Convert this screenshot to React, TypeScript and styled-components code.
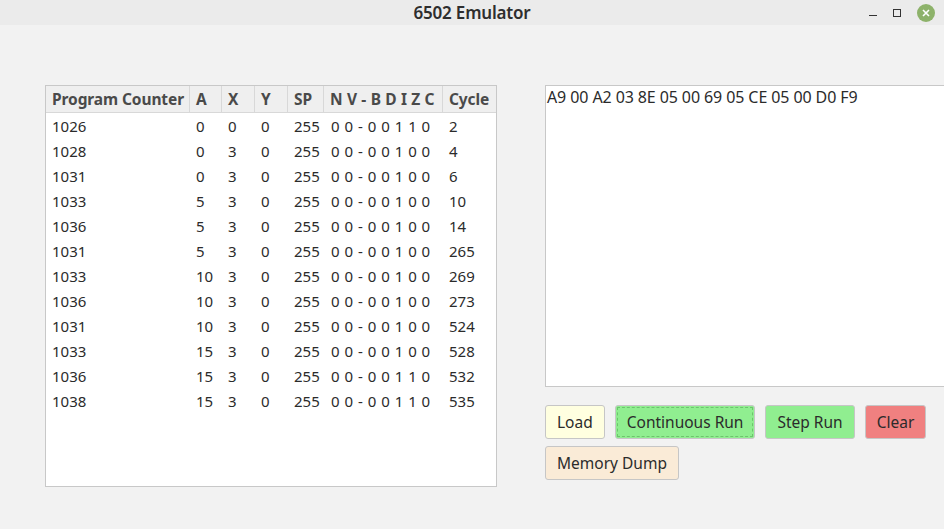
import React from "react";
import styled, { createGlobalStyle } from "styled-components";

const GlobalStyle = createGlobalStyle`
  html, body {
    margin: 0;
    padding: 0;
    background: #f2f2f2;
    font-family: "Noto Sans", "Open Sans", sans-serif;
  }
`;

const Window = styled.div`
  width: 944px;
  height: 529px;
  display: flex;
  flex-direction: column;
  background: #f2f2f2;
  overflow: hidden;
`;

const TitleBar = styled.div`
  height: 25px;
  flex-shrink: 0;
  background: #ebebeb;
  display: grid;
  grid-template-columns: 1fr auto 1fr;
  align-items: center;
`;

const Title = styled.div`
  grid-column: 2;
  font-family: "Noto Sans", sans-serif;
  font-weight: 600;
  font-size: 17px;
  color: #2e2e2e;
  letter-spacing: -0.2px;
`;

const Controls = styled.div`
  justify-self: end;
  display: flex;
  align-items: center;
  gap: 12px;
  padding-right: 9px;
`;

const Minimize = styled.div`
  width: 8px;
  height: 1px;
  background: #333;
  margin-top: 6px;
`;

const Maximize = styled.div`
  width: 6px;
  height: 6px;
  border: 1px solid #333;
  margin-left: 4px;
  margin-right: 4px;
`;

const Close = styled.div`
  width: 18px;
  height: 18px;
  border-radius: 50%;
  background: #8db26a;
  display: flex;
  align-items: center;
  justify-content: center;
`;

const Content = styled.div`
  display: flex;
  gap: 48px;
  padding: 60px 0 0 45px;
  align-items: flex-start;
`;

const TableFrame = styled.div`
  width: 450px;
  height: 400px;
  background: #ffffff;
  border: 1px solid #c8c8c8;
  flex-shrink: 0;
`;

const Grid = styled.div`
  display: grid;
  grid-template-columns: 144px 32px 33px 33px 36px 119px 53px;
`;

const HeadCell = styled.div<{ $last?: boolean }>`
  height: 26px;
  background: #efefef;
  border-bottom: 1px solid #d8d8d8;
  border-right: ${({ $last }) => ($last ? "none" : "1px solid #d8d8d8")};
  display: flex;
  align-items: center;
  padding-left: 6px;
  font-weight: 700;
  font-size: 15.5px;
  color: #4a4a4a;
  letter-spacing: -0.1px;
  white-space: nowrap;
  overflow: hidden;
`;

const FlagHead = styled(HeadCell)`
  word-spacing: 0.5px;
`;

const Cell = styled.div`
  height: 25px;
  display: flex;
  align-items: center;
  padding-left: 6px;
  font-size: 15px;
  color: #2b2b2b;
  white-space: nowrap;
`;

const FlagCell = styled(Cell)`
  padding-left: 7px;
  word-spacing: 1px;
`;

const Right = styled.div`
  display: flex;
  flex-direction: column;
  gap: 18px;
  flex: 1;
`;

const CodeBox = styled.div`
  height: 302px;
  background: #ffffff;
  border: 1px solid #c8c8c8;
  border-right: none;
  padding: 0 1px;
  font-size: 16px;
  color: #2b2b2b;
  letter-spacing: -0.1px;
  box-sizing: border-box;
`;

const ButtonRows = styled.div`
  display: flex;
  flex-direction: column;
  gap: 7px;
`;

const ButtonRow = styled.div`
  display: flex;
  gap: 10px;
`;

const Button = styled.button<{ $bg: string; $focus?: boolean }>`
  height: 34px;
  padding: 0 11px;
  border-radius: 3px;
  border: 1px solid #c6c6c6;
  background: ${({ $bg }) => $bg};
  font-family: "Noto Sans", "Open Sans", sans-serif;
  font-size: 15.5px;
  color: #2b2b2b;
  outline: ${({ $focus }) => ($focus ? "1px dashed #6cc56c" : "none")};
  outline-offset: -3px;
  cursor: pointer;
`;

const rows = [
  ["1026", "0", "0", "0", "255", "0 0 - 0 0 1 1 0", "2"],
  ["1028", "0", "3", "0", "255", "0 0 - 0 0 1 0 0", "4"],
  ["1031", "0", "3", "0", "255", "0 0 - 0 0 1 0 0", "6"],
  ["1033", "5", "3", "0", "255", "0 0 - 0 0 1 0 0", "10"],
  ["1036", "5", "3", "0", "255", "0 0 - 0 0 1 0 0", "14"],
  ["1031", "5", "3", "0", "255", "0 0 - 0 0 1 0 0", "265"],
  ["1033", "10", "3", "0", "255", "0 0 - 0 0 1 0 0", "269"],
  ["1036", "10", "3", "0", "255", "0 0 - 0 0 1 0 0", "273"],
  ["1031", "10", "3", "0", "255", "0 0 - 0 0 1 0 0", "524"],
  ["1033", "15", "3", "0", "255", "0 0 - 0 0 1 0 0", "528"],
  ["1036", "15", "3", "0", "255", "0 0 - 0 0 1 1 0", "532"],
  ["1038", "15", "3", "0", "255", "0 0 - 0 0 1 1 0", "535"],
];

const headers = ["Program Counter", "A", "X", "Y", "SP", "N V - B D I Z C", "Cycle"];

export default function App() {
  return (
    <Window>
      <GlobalStyle />
      <TitleBar>
        <Title>6502 Emulator</Title>
        <Controls>
          <Minimize />
          <Maximize />
          <Close>
            <svg width="10" height="10" viewBox="0 0 10 10">
              <path d="M2 2 L8 8 M8 2 L2 8" stroke="#fff" strokeWidth="1.6" />
            </svg>
          </Close>
        </Controls>
      </TitleBar>
      <Content>
        <TableFrame>
          <Grid>
            {headers.map((h, i) =>
              i === 5 ? (
                <FlagHead key={h}>{h}</FlagHead>
              ) : (
                <HeadCell key={h} $last={i === headers.length - 1}>
                  {h}
                </HeadCell>
              )
            )}
            {rows.map((r, ri) =>
              r.map((v, ci) =>
                ci === 5 ? (
                  <FlagCell key={`${ri}-${ci}`}>{v}</FlagCell>
                ) : (
                  <Cell key={`${ri}-${ci}`}>{v}</Cell>
                )
              )
            )}
          </Grid>
        </TableFrame>
        <Right>
          <CodeBox>A9 00 A2 03 8E 05 00 69 05 CE 05 00 D0 F9</CodeBox>
          <ButtonRows>
            <ButtonRow>
              <Button $bg="#ffffe0">Load</Button>
              <Button $bg="#90ee90" $focus>
                Continuous Run
              </Button>
              <Button $bg="#90ee90">Step Run</Button>
              <Button $bg="#f08080">Clear</Button>
            </ButtonRow>
            <ButtonRow>
              <Button $bg="#faebd7">Memory Dump</Button>
            </ButtonRow>
          </ButtonRows>
        </Right>
      </Content>
    </Window>
  );
}
